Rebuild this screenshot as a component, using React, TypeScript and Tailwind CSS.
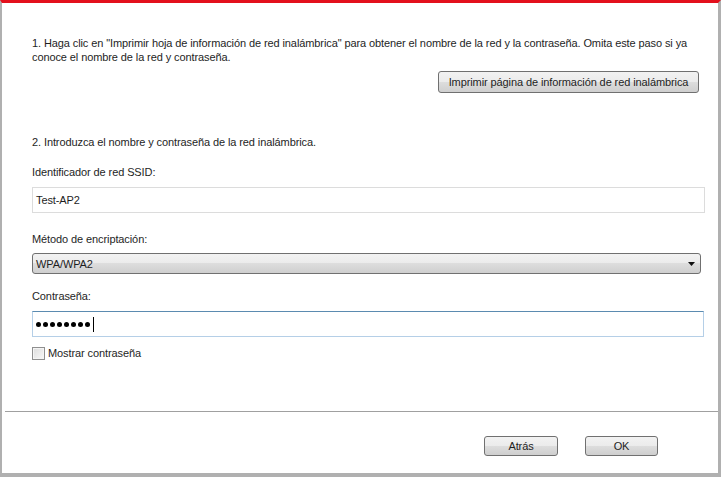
import React from "react";

function WinButton({ label, className }: { label: string; className: string }) {
	return (
		<button
			className={`flex items-center justify-center rounded-[3px] border border-[#707070] bg-[linear-gradient(#f2f2f2,#ebebeb_50%,#dddddd_50%,#cfcfcf)] text-[#1e1e1e] ${className}`}
		>
			{label}
		</button>
	);
}

export default function App() {
	return (
		<div className="flex h-[477px] w-[721px] flex-col border-t-[3px] border-r-[3px] border-b-4 border-l-2 border-t-[#e3101c] border-r-[#b0b0b0] border-b-[#b0b0b0] border-l-[#b0b0b0] bg-white font-['Liberation_Sans',sans-serif] text-[11px] leading-[14px] tracking-[-0.1px] text-[#1e1e1e]">
			<div className="flex flex-1 flex-col pl-[30px] pr-[14px]">
				<p className="mt-[33px]">
					1. Haga clic en "Imprimir hoja de información de red inalámbrica" para obtener el nombre de la red y la contraseña. Omita este paso si ya
					<br />
					conoce el nombre de la red y contraseña.
				</p>
				<div className="mt-[7px] flex justify-end pr-[5px]">
					<WinButton label="Imprimir página de información de red inalámbrica" className="h-[22px] w-[261px]" />
				</div>

				<p className="mt-[42px]">2. Introduzca el nombre y contraseña de la red inalámbrica.</p>

				<p className="mt-[16px]">Identificador de red SSID:</p>
				<div className="mt-[8px] flex h-[26px] w-[673px] items-center border border-[#dcdcdc] px-[3px]">Test-AP2</div>

				<p className="mt-[19px]">Método de encriptación:</p>
				<div className="mt-[7px] flex h-[21px] w-[669px] items-center justify-between rounded-[3px] border border-[#707070] bg-[linear-gradient(#f2f2f2,#ebebeb_50%,#dddddd_50%,#cfcfcf)] pr-[5px] pl-[3px]">
					<span>WPA/WPA2</span>
					<svg width="7" height="4" viewBox="0 0 7 4">
						<path d="M0 0h7L3.5 4z" fill="#111" />
					</svg>
				</div>

				<p className="mt-[15px]">Contraseña:</p>
				<div className="mt-[8px] flex h-[26px] w-[672px] items-center gap-[2px] border border-[#b5cfe7] border-t-[#5b8bb0] px-[3px]">
					{Array.from({ length: 8 }).map((_, i) => (
						<span key={i} className="h-[5px] w-[5px] rounded-full bg-black" />
					))}
					<span className="ml-[1px] h-[15px] w-[1px] bg-black" />
				</div>

				<label className="mt-[9px] flex items-center gap-[3px]">
					<span className="h-[13px] w-[13px] border border-[#8f8f8f] bg-[linear-gradient(135deg,#dcdcdc,#f8f8f8)] shadow-[inset_0_0_0_1px_#f4f4f4]" />
					<span>Mostrar contraseña</span>
				</label>
			</div>

			<div className="ml-[3px] flex h-[62px] items-start justify-end gap-[27px] border-t border-[#a0a0a0] pt-[24px] pr-[60px]">
				<WinButton label="Atrás" className="h-[20px] w-[74px]" />
				<WinButton label="OK" className="h-[20px] w-[73px]" />
			</div>
		</div>
	);
}
